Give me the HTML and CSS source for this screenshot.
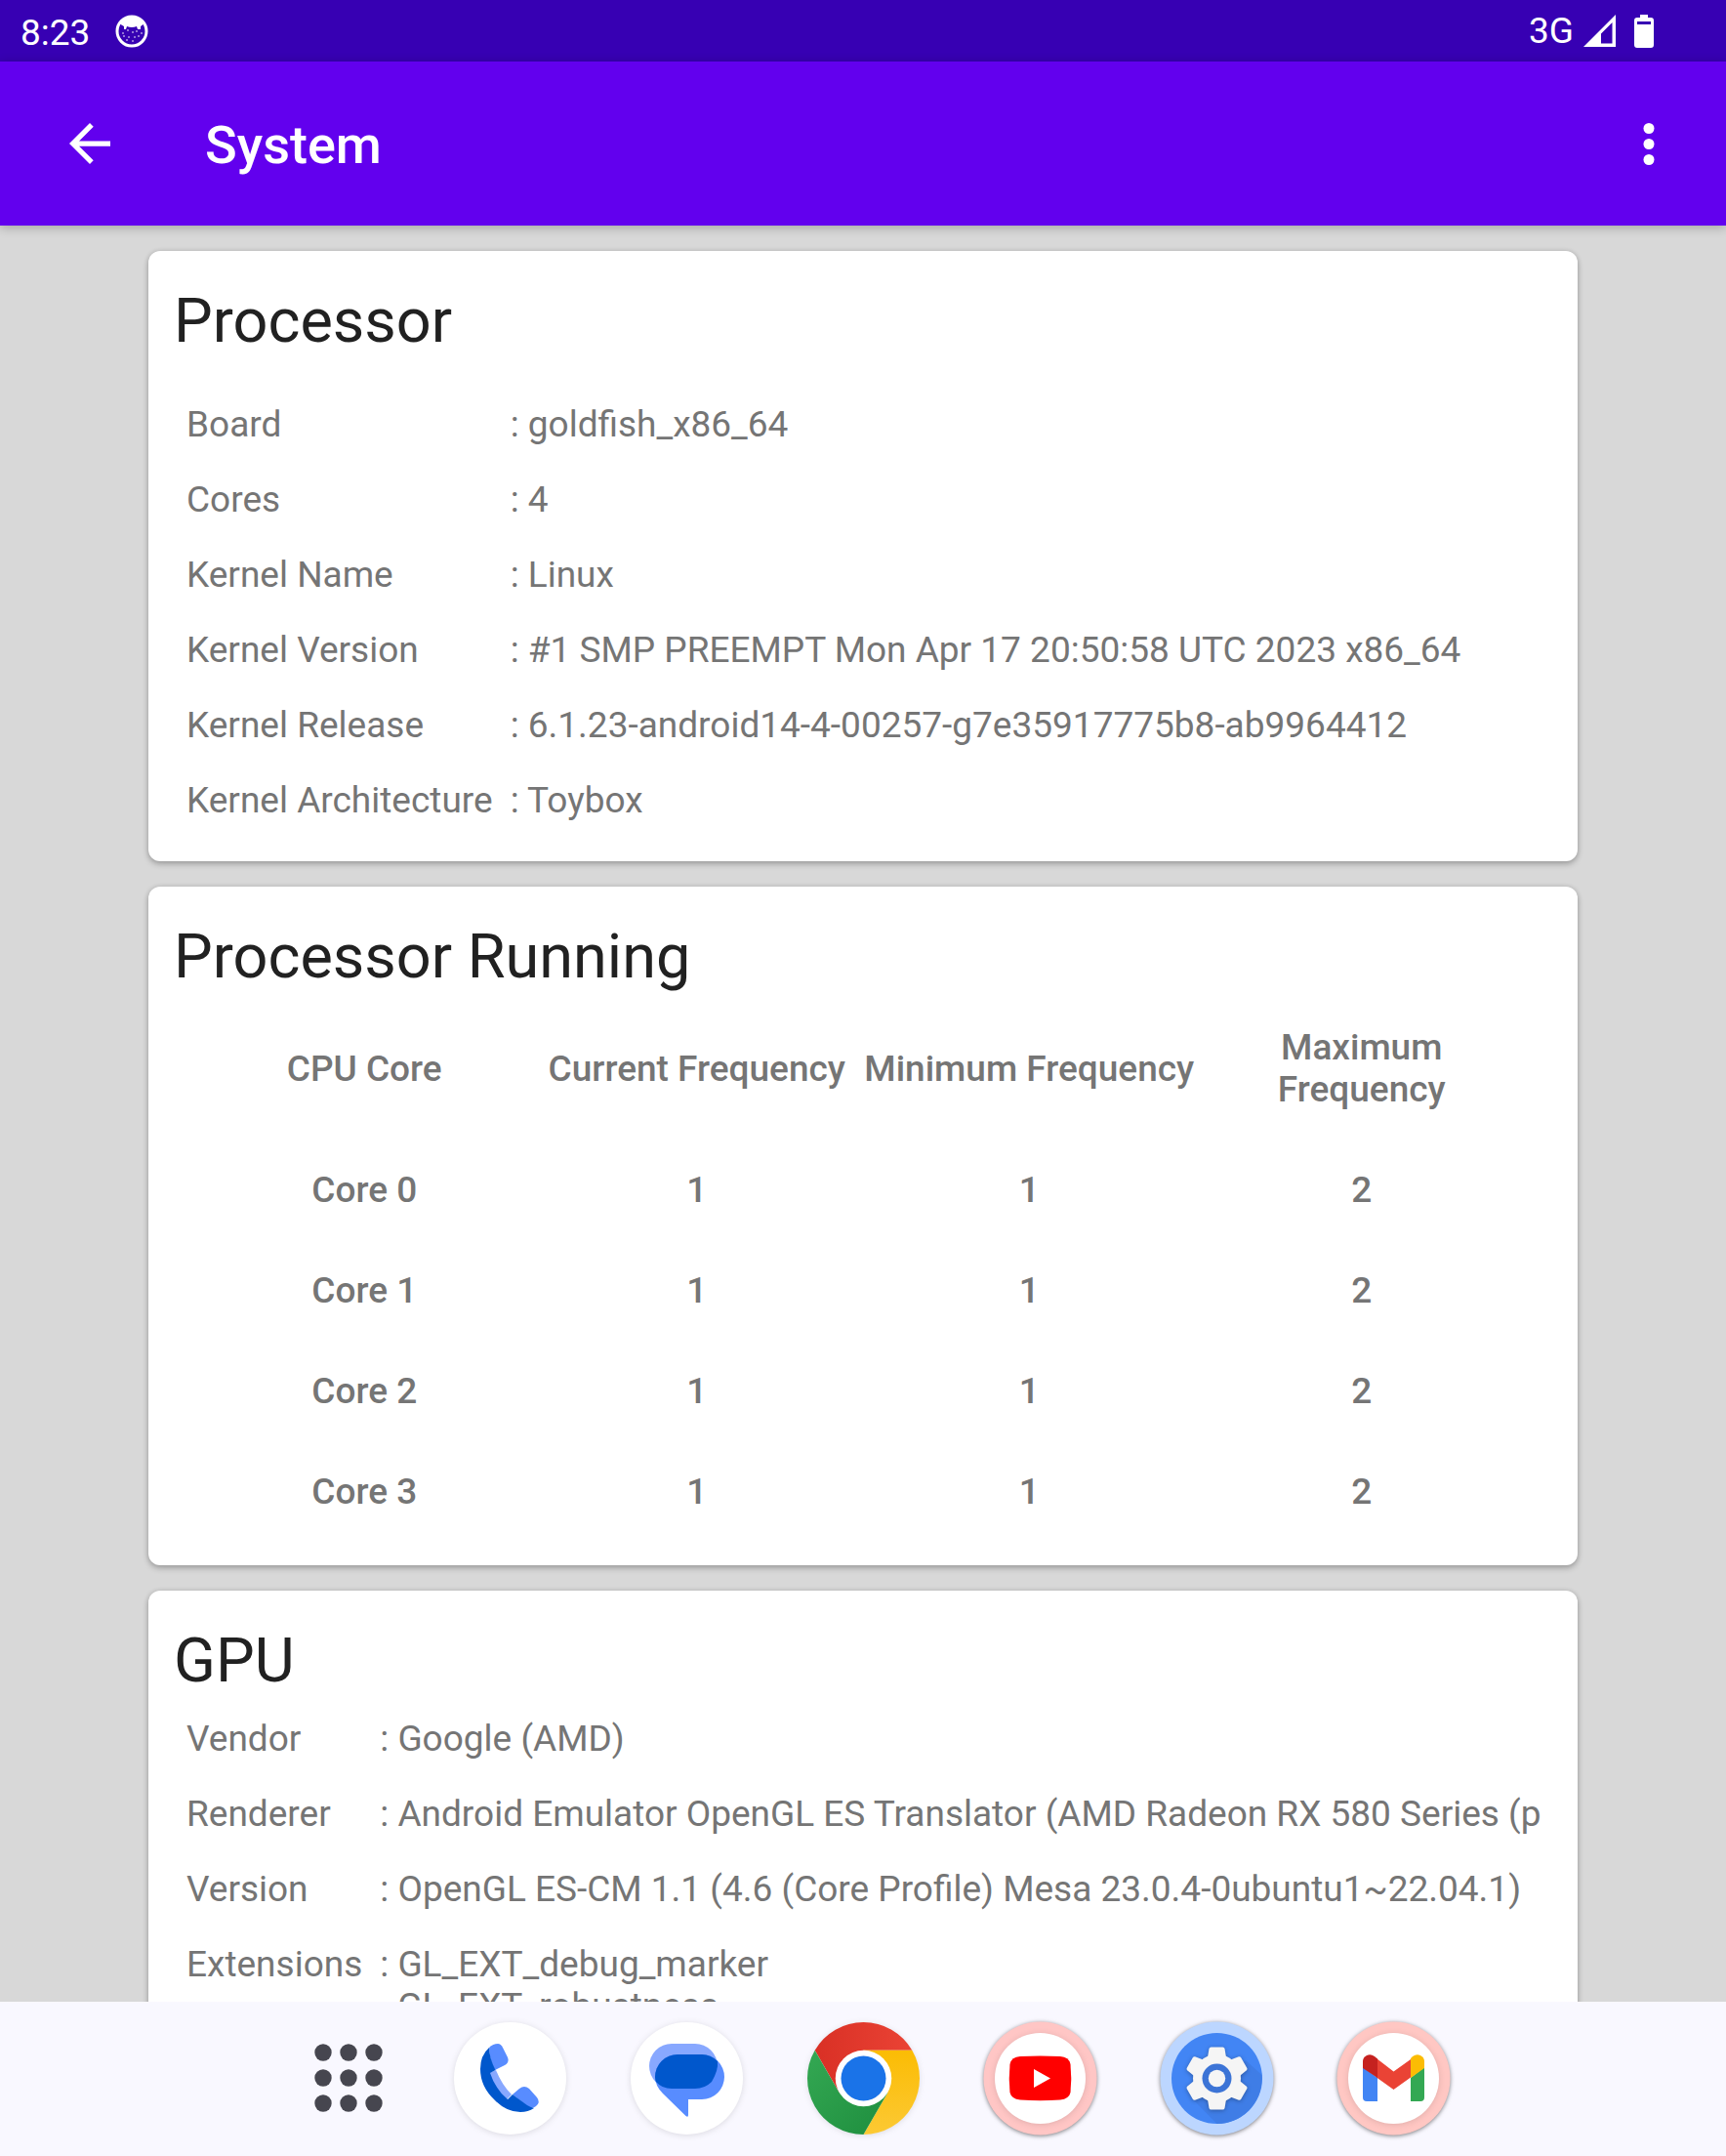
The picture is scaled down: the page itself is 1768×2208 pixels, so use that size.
FILE: index.html
```html
<!DOCTYPE html>
<html lang="en">
<head>
<meta charset="utf-8">
<meta name="viewport" content="width=device-width, initial-scale=1">
<title>System</title>
<link rel="stylesheet" href="styles.css">
</head>
<body>
<div class="screen">
  <div class="status-bar">
    <div class="status-group">
      <span class="clock">8:23</span>
      <svg class="status-icon" width="34" height="34" viewBox="0 0 34 34" aria-hidden="true">
        <circle cx="17" cy="17" r="15" fill="none" stroke="#fff" stroke-width="3"/>
        <path d="M4 9Q10 1 17 1Q24 1 30 9L26 12L26 15L23 15L22 12Q17 14 12 12L11 15L9 15L9 12Z" fill="#fff"/>
        <g fill="#fff" opacity=".6"><circle cx="8" cy="19" r="1"/><circle cx="13" cy="16" r="1"/><circle cx="9" cy="22" r="1"/><circle cx="18" cy="18" r="1"/><circle cx="22" cy="17" r="1"/><circle cx="27" cy="19" r="1"/><circle cx="20" cy="23" r="1"/><circle cx="14" cy="23" r="1"/><circle cx="24" cy="22" r="1"/><circle cx="18" cy="27" r="1"/><circle cx="12" cy="26" r="1"/></g>
      </svg>
    </div>
    <div class="status-group status-right">
      <div class="cellular">
        <span>3G</span>
        <svg width="33" height="33" viewBox="0 0 33 33" aria-hidden="true"><path fill="#fff" fill-rule="evenodd" d="M33 0V33H0ZM29.500 8L18 19.500V29.500H29.500Z"/></svg>
      </div>
      <svg width="20" height="34" viewBox="0 0 20 34" aria-hidden="true"><path fill="#fff" fill-rule="evenodd" d="M6 0H14V3H17Q20 3 20 6V31Q20 34 17 34H3Q0 34 0 31V6Q0 3 3 3H6ZM3 7V10H17V7Z"/></svg>
    </div>
  </div>

  <header class="app-bar">
    <button class="icon-button" type="button" aria-label="Back">
      <svg width="42" height="42" viewBox="4 4 16 16" aria-hidden="true"><path fill="#fff" d="M20 11H7.830l5.590-5.590L12 4l-8 8 8 8 1.410-1.410L7.830 13H20z"/></svg>
    </button>
    <h1 class="app-title">System</h1>
    <button class="icon-button" type="button" aria-label="More options">
      <svg width="12" height="43" viewBox="0 0 12 43" aria-hidden="true" fill="#fff"><circle cx="6" cy="5.500" r="5.500"/><circle cx="6" cy="21.500" r="5.500"/><circle cx="6" cy="37.500" r="5.500"/></svg>
    </button>
  </header>

  <main class="content">
    <section class="card">
      <h2 class="card-title">Processor</h2>
      <table class="info info-spaced">
        <tr><th scope="row">Board</th><td>: goldfish_x86_64</td></tr>
        <tr><th scope="row">Cores</th><td>: 4</td></tr>
        <tr><th scope="row">Kernel Name</th><td>: Linux</td></tr>
        <tr><th scope="row">Kernel Version</th><td>: #1 SMP PREEMPT Mon Apr 17 20:50:58 UTC 2023 x86_64</td></tr>
        <tr><th scope="row">Kernel Release</th><td>: 6.1.23-android14-4-00257-g7e35917775b8-ab9964412</td></tr>
        <tr><th scope="row">Kernel Architecture</th><td>: Toybox</td></tr>
      </table>
    </section>

    <section class="card">
      <h2 class="card-title">Processor Running</h2>
      <table class="cores">
        <thead>
          <tr><th scope="col">CPU Core</th><th scope="col">Current Frequency</th><th scope="col">Minimum Frequency</th><th scope="col">Maximum Frequency</th></tr>
        </thead>
        <tbody>
          <tr><th scope="row">Core 0</th><td>1</td><td>1</td><td>2</td></tr>
          <tr><th scope="row">Core 1</th><td>1</td><td>1</td><td>2</td></tr>
          <tr><th scope="row">Core 2</th><td>1</td><td>1</td><td>2</td></tr>
          <tr><th scope="row">Core 3</th><td>1</td><td>1</td><td>2</td></tr>
        </tbody>
      </table>
    </section>

    <section class="card">
      <h2 class="card-title">GPU</h2>
      <table class="info">
        <tr><th scope="row">Vendor</th><td>: Google (AMD)</td></tr>
        <tr><th scope="row">Renderer</th><td>: Android Emulator OpenGL ES Translator (AMD Radeon RX 580 Series (p</td></tr>
        <tr><th scope="row">Version</th><td>: OpenGL ES-CM 1.1 (4.6 (Core Profile) Mesa 23.0.4-0ubuntu1~22.04.1)</td></tr>
        <tr><th scope="row">Extensions</th><td>: GL_EXT_debug_marker<br><span class="hang">GL_EXT_robustness</span></td></tr>
      </table>
    </section>
  </main>

  <nav class="taskbar" aria-label="Taskbar">
    <button class="all-apps" type="button" aria-label="All apps">
      <svg width="70" height="70" viewBox="0 0 70 70" fill="#46464f" aria-hidden="true"><circle cx="9" cy="9" r="8.700"/><circle cx="35" cy="9" r="8.700"/><circle cx="61" cy="9" r="8.700"/><circle cx="9" cy="35" r="8.700"/><circle cx="35" cy="35" r="8.700"/><circle cx="61" cy="35" r="8.700"/><circle cx="9" cy="61" r="8.700"/><circle cx="35" cy="61" r="8.700"/><circle cx="61" cy="61" r="8.700"/></svg>
    </button>
    <div class="apps">
      <button class="app" type="button" aria-label="Phone">
        <svg viewBox="0 0 117 117" aria-hidden="true">
          <circle class="soft" cx="58.500" cy="58.500" r="57.500" fill="#fff"/>
          <path fill="#88a8ff" d="M37 53L44 50Q50 65 60 75L55 80Q41 68 37 53Z"/>
          <path fill="#588cff" d="M37 27Q41 23 46 23Q49 23 51 27L56 37Q58 42 53 45L43 50Q37 39 37 27Z"/>
          <path fill="#588cff" d="M61 75L68 69Q73 65 78 69L86 78Q90 83 85 87Q83 89 79 89Z"/>
          <path fill="#0057cc" d="M37 27Q28 35 28 49Q28 67 43 81Q55 93 69 93Q77 93 83 89Q79 88 76 86L61 75L56 80Q43 69 38 53L43.500 50Q37 37 37 27Z"/>
        </svg>
      </button>
      <button class="app" type="button" aria-label="Messages">
        <svg viewBox="0 0 117 117" aria-hidden="true">
          <circle class="soft" cx="58.500" cy="58.500" r="57.500" fill="#fff"/>
          <rect x="20" y="23" width="70" height="46" rx="23" fill="#88a8ff"/>
          <path fill="#588cff" d="M49 34H74A23 23 0 0 1 74 80H60V96Q60 99 57.500 97L34 74Q26 66 26 57A23 23 0 0 1 49 34Z"/>
          <path fill="#0057cc" d="M49 34H74Q83 34 90 41Q91 50 84 62Q77 69 67 69H43Q33 69 27 62Q26 60 26 57A23 23 0 0 1 49 34Z"/>
        </svg>
      </button>
      <button class="app" type="button" aria-label="Chrome">
        <svg viewBox="0 0 117 117" aria-hidden="true">
          <defs>
            <linearGradient id="red" x1="0" x2="1"><stop offset="0" stop-color="#d93025"/><stop offset="1" stop-color="#ea4335"/></linearGradient>
            <linearGradient id="green" x1="0" y1="0" x2="1" y2="1"><stop offset="0" stop-color="#34a853"/><stop offset="1" stop-color="#1e8e3e"/></linearGradient>
            <linearGradient id="yellow" x1="0" y1="1" x2="0" y2="0"><stop offset="0" stop-color="#fcc934"/><stop offset="1" stop-color="#fbbc04"/></linearGradient>
          </defs>
          <circle class="soft" cx="58.500" cy="58.500" r="57" fill="#fff"/>
          <path fill="url(#red)" d="M8.700 29.750A57.500 57.500 0 0 1 108.300 29.750H58.500L33.600 72.900Z"/>
          <path fill="url(#yellow)" d="M108.300 29.750A57.500 57.500 0 0 1 58.500 116L83.400 72.900L58.500 29.750Z"/>
          <path fill="url(#green)" d="M58.500 116A57.500 57.500 0 0 1 8.700 29.750L33.600 72.900L83.400 72.900Z"/>
          <circle cx="58.500" cy="58.500" r="28.750" fill="#fff"/><circle cx="58.500" cy="58.500" r="23" fill="#1a73e8"/>
        </svg>
      </button>
      <button class="app" type="button" aria-label="YouTube">
        <svg viewBox="0 0 117 117" aria-hidden="true">
          <circle class="ring" cx="58.500" cy="58.500" r="58" fill="#ffc6c5"/>
          <circle class="soft" cx="58.500" cy="58.500" r="46.500" fill="#fff"/>
          <path fill="#f00" d="M38 36Q58.500 35 79 36Q88 36.500 89.500 44Q91 58.500 89.500 73Q88 79.500 79 80.500Q58.500 82 38 80.500Q29 79.500 27.500 73Q26 58.500 27.500 44Q29 36.500 38 36Z"/>
          <path fill="#fff" d="M52 49L69 58.500L52 68Z"/>
        </svg>
      </button>
      <button class="app" type="button" aria-label="Settings">
        <svg viewBox="0 0 117 117" aria-hidden="true">
          <circle class="ring" cx="58.500" cy="58.500" r="58" fill="#bcd6ff"/>
          <circle cx="58.500" cy="58.500" r="46.500" fill="#4285f4"/>
          <path fill="#3f7de6" d="M88 40L104.500 55A46.500 46.500 0 0 1 58.500 105L34 80Z"/>
          <g class="gear">
            <g fill="#f5f5f5">
              <circle cx="58.500" cy="58.500" r="24.500"/>
              <path id="tooth" d="M52.500 26.500H64.500Q66 26.500 66.500 28L68 37L72 41L45 41L49 37L50.500 28Q51 26.500 52.500 26.500Z"/>
              <use href="#tooth" transform="rotate(60 58.500 58.500)"/><use href="#tooth" transform="rotate(120 58.500 58.500)"/><use href="#tooth" transform="rotate(180 58.500 58.500)"/><use href="#tooth" transform="rotate(240 58.500 58.500)"/><use href="#tooth" transform="rotate(300 58.500 58.500)"/>
            </g>
          </g>
          <circle cx="58.500" cy="58.500" r="15" fill="#3c74d6"/><circle cx="58.500" cy="58.500" r="8.700" fill="#f5f5f5"/>
        </svg>
      </button>
      <button class="app" type="button" aria-label="Gmail">
        <svg viewBox="0 0 117 117" aria-hidden="true">
          <circle class="ring" cx="58.500" cy="58.500" r="58" fill="#ffc7c3"/>
          <circle class="soft" cx="58.500" cy="58.500" r="46.500" fill="#fff"/>
          <path fill="#4285f4" d="M27 47L42 58V82H31Q27 82 27 78Z"/>
          <path fill="#34a853" d="M90 47L76 58V82H86Q90 82 90 78Z"/>
          <path fill="#ea4335" d="M41 38L58.500 51.500L76 39V57.500L58.500 70L41 57.500Z"/>
          <path fill="#c5221f" d="M27 48V41Q27 37 31 35Q35 33 39 36L42 38.500V58Z"/>
          <path fill="#fbbc04" d="M90 48V41Q90 37 86 35Q82 33 78 36L76 38V58Z"/>
        </svg>
      </button>
    </div>
  </nav>
</div>
</body>
</html>
```
FILE: styles.css
```css
* {
  box-sizing: border-box;
}

body {
  margin: 0;
  font-family: Roboto, "Liberation Sans", sans-serif;
  font-size: 37px;
  line-height: 43px;
  color: #757575;
  background: #d8d8d8;
}

button {
  padding: 0;
  border: 0;
  background: none;
  font: inherit;
  cursor: pointer;
}

svg {
  display: block;
}

.screen {
  display: flex;
  flex-direction: column;
  height: 100vh;
}

.status-bar {
  display: flex;
  flex: none;
  align-items: center;
  justify-content: space-between;
  height: 63px;
  padding: 0 74px 0 21px;
  color: #fff;
  background: #3700b3;
}

.status-group {
  display: flex;
  align-items: center;
  gap: 26px;
}

.clock {
  padding-top: 3px;
}

.status-right {
  gap: 19px;
}

.cellular {
  display: flex;
  align-items: center;
  gap: 10px;
}

.app-bar {
  position: relative;
  z-index: 1;
  display: flex;
  flex: none;
  align-items: center;
  height: 168px;
  padding: 0 42px;
  color: #fff;
  background: #6200ee;
  box-shadow: 0 2px 10px rgba(0, 0, 0, 0.25);
}

.icon-button {
  display: flex;
  align-items: center;
  justify-content: center;
  width: 100px;
  height: 100px;
}

.app-title {
  flex: 1;
  margin: 0;
  padding: 4px 0 0 68px;
  font-size: 54px;
  font-weight: 500;
  line-height: 62px;
}

.app-bar .icon-button:last-child {
  width: 74px;
}

.content {
  display: flex;
  flex: 1;
  flex-direction: column;
  gap: 26px;
  min-height: 0;
  padding: 26px 152px 0;
  overflow: auto;
  scrollbar-width: none;
}

.card {
  flex: none;
  padding: 30px 26px 24px;
  border-radius: 12px;
  background: #fff;
  box-shadow: 0 3px 6px rgba(0, 0, 0, 0.24), 0 0 5px rgba(0, 0, 0, 0.12);
}

.card-title {
  margin: 0;
  font-size: 63px;
  font-weight: 400;
  line-height: 83px;
  color: #212121;
}

.info {
  margin-left: 13px;
  border-collapse: collapse;
}

.info-spaced {
  margin-top: 26px;
}

.info th,
.info td {
  padding: 17px 0;
  font-weight: 400;
  text-align: left;
  vertical-align: top;
  white-space: nowrap;
}

.info th {
  padding-right: 18px;
}

.hang {
  padding-left: 18px;
}

.cores {
  width: calc(100% - 50px);
  margin: 0 25px;
  table-layout: fixed;
  border-collapse: collapse;
}

.cores th,
.cores td {
  padding: 30px 0;
  font-weight: 500;
  text-align: center;
}

.taskbar {
  display: flex;
  flex: none;
  align-items: center;
  justify-content: center;
  gap: 32px;
  height: 158px;
  padding-bottom: 2px;
  background: #f9f8ff;
}

.all-apps {
  display: flex;
  align-items: center;
  justify-content: center;
  width: 150px;
  height: 117px;
}

.apps {
  display: flex;
  gap: 64px;
}

.app,
.app svg {
  width: 117px;
  height: 117px;
  overflow: visible;
}

.soft {
  filter: drop-shadow(0 1px 3px rgba(0, 0, 0, 0.12));
}

.ring {
  filter: drop-shadow(0 1px 2px rgba(0, 0, 0, 0.5));
}

.gear {
  filter: drop-shadow(0 1px 2px rgba(0, 0, 0, 0.3));
}
```
